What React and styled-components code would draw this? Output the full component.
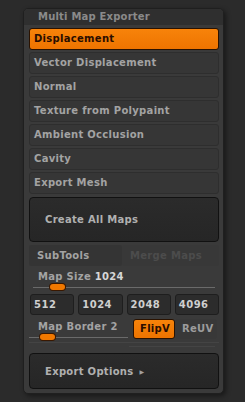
import React from "react";
import styled, { createGlobalStyle, css } from "styled-components";

const GlobalStyle = createGlobalStyle`
  html, body {
    margin: 0;
    padding: 0;
    background: #2b2b2b;
  }
  body {
    font-family: "DejaVu Sans", "Liberation Sans", sans-serif;
    font-weight: bold;
    font-size: 10px;
  }
`;

const Page = styled.div`
  width: 245px;
  height: 402px;
  padding: 8px 0 0 23px;
  box-sizing: border-box;
`;

const Panel = styled.div`
  width: 201px;
  height: 386px;
  box-sizing: border-box;
  background: #3a3a3a;
  border: 1px solid #1f1f1f;
  border-radius: 5px;
  box-shadow: 2px 2px 5px rgba(0, 0, 0, 0.45);
  overflow: hidden;
  display: flex;
  flex-direction: column;
`;

const Header = styled.div`
  height: 16px;
  background: #2f2f2f;
  color: #8a8a8a;
  padding-left: 14px;
  line-height: 16px;
  letter-spacing: 0.2px;
`;

const Body = styled.div`
  padding: 3px 4px 0 5px;
  display: flex;
  flex-direction: column;
`;

const List = styled.div`
  display: flex;
  flex-direction: column;
  gap: 2px;
`;

const MapButton = styled.div`
  height: 22px;
  box-sizing: border-box;
  border-radius: 3px;
  padding-left: 4px;
  line-height: 20px;
  letter-spacing: 0.3px;
  background: #363636;
  border: 1px solid #2e2e2e;
  color: #a3a3a3;
  ${(p) =>
    p.active &&
    css`
      background: linear-gradient(#f7830a, #ee7400);
      border: 1px solid #2a1200;
      color: #2a0e00;
    `};
`;

const BigButton = styled.div`
  box-sizing: border-box;
  margin-top: ${(p) => p.mt || "3px"};
  height: ${(p) => p.h || "45px"};
  background: linear-gradient(#2b2b2b, #262626);
  border: 1px solid #111;
  border-radius: 4px;
  padding-left: 15px;
  display: flex;
  align-items: center;
  gap: 6px;
  color: #b0b0b0;
  letter-spacing: 0.3px;
`;

const Arrow = styled.span`
  font-size: 6px;
  color: #a0a0a0;
  margin-top: 1px;
`;

const SplitRow = styled.div`
  margin-top: 3px;
  height: 21px;
  display: grid;
  grid-template-columns: 93px 1fr;
`;

const SplitCell = styled.div`
  background: ${(p) => (p.dim ? "#383838" : "#343434")};
  border-radius: 2px;
  padding-left: 8px;
  line-height: 21px;
  letter-spacing: 0.3px;
  color: ${(p) => (p.dim ? "#4c4c4c" : "#a3a3a3")};
`;

const Label = styled.div`
  padding-left: 9px;
  height: 15px;
  line-height: 15px;
  margin-top: ${(p) => p.mt || "3px"};
  color: #a3a3a3;
  letter-spacing: 0.3px;
  span {
    color: #d6d6d6;
  }
`;

const Slider = styled.div`
  position: relative;
  height: 7px;
  margin: 0 ${(p) => p.mr || "4px"} 0 ${(p) => p.ml || "4px"};
  &::before {
    content: "";
    position: absolute;
    left: 0;
    right: 0;
    top: 3px;
    height: 1px;
    background: #6a6a6a;
  }
`;

const Knob = styled.div`
  position: absolute;
  top: 0;
  width: 15px;
  height: 6px;
  border-radius: 3px;
  background: #f07800;
  box-shadow: 0 0 0 1px #3a1800;
`;

const SizeRow = styled.div`
  margin-top: 3px;
  display: grid;
  grid-template-columns: repeat(4, 1fr);
  gap: 4px;
  padding-left: 1px;
`;

const SizeButton = styled.div`
  height: 21px;
  box-sizing: border-box;
  background: #2c2c2c;
  border: 1px solid #1e1e1e;
  border-radius: 3px;
  padding-left: 3px;
  line-height: 19px;
  color: #cfcfcf;
  letter-spacing: 0.5px;
`;

const BorderRow = styled.div`
  margin-top: 3px;
  display: flex;
  align-items: flex-start;
  height: 24px;
  border-bottom: 1px solid #444;
`;

const BorderLeft = styled.div`
  width: 103px;
  display: flex;
  flex-direction: column;
`;

const Toggle = styled.div`
  width: 42px;
  height: 20px;
  box-sizing: border-box;
  margin-top: 1px;
  border-radius: 3px;
  padding-left: 6px;
  line-height: 18px;
  letter-spacing: 0.3px;
  ${(p) =>
    p.active
      ? css`
          background: linear-gradient(#f7830a, #ee7400);
          border: 1px solid #2a1200;
          color: #2a0e00;
          margin-left: 1px;
        `
      : css`
          background: #383838;
          border: 1px solid #383838;
          color: #9c9c9c;
        `};
`;

const Divider = styled.div`
  margin: 3px 4px 0 100px;
  height: 1px;
  background: #444;
`;

const maps = [
  "Displacement",
  "Vector Displacement",
  "Normal",
  "Texture from Polypaint",
  "Ambient Occlusion",
  "Cavity",
  "Export Mesh",
];

const App = () => {
  return (
    <Page>
      <GlobalStyle />
      <Panel>
        <Header>Multi Map Exporter</Header>
        <Body>
          <List>
            {maps.map((m, i) => (
              <MapButton key={m} active={i === 0}>
                {m}
              </MapButton>
            ))}
          </List>
          <BigButton>Create All Maps</BigButton>
          <SplitRow>
            <SplitCell>SubTools</SplitCell>
            <SplitCell dim>Merge Maps</SplitCell>
          </SplitRow>
          <Label>
            Map Size <span>1024</span>
          </Label>
          <Slider>
            <Knob style={{ left: "17px" }} />
          </Slider>
          <SizeRow>
            <SizeButton>512</SizeButton>
            <SizeButton>1024</SizeButton>
            <SizeButton>2048</SizeButton>
            <SizeButton>4096</SizeButton>
          </SizeRow>
          <BorderRow>
            <BorderLeft>
              <Label mt="1px">Map Border 2</Label>
              <Slider ml="0px">
                <Knob style={{ left: "11px" }} />
              </Slider>
            </BorderLeft>
            <Toggle active>FlipV</Toggle>
            <Toggle>ReUV</Toggle>
          </BorderRow>
          <Divider />
          <BigButton mt="6px" h="36px">
            Export Options <Arrow>▶</Arrow>
          </BigButton>
        </Body>
      </Panel>
    </Page>
  );
};

export default App;
